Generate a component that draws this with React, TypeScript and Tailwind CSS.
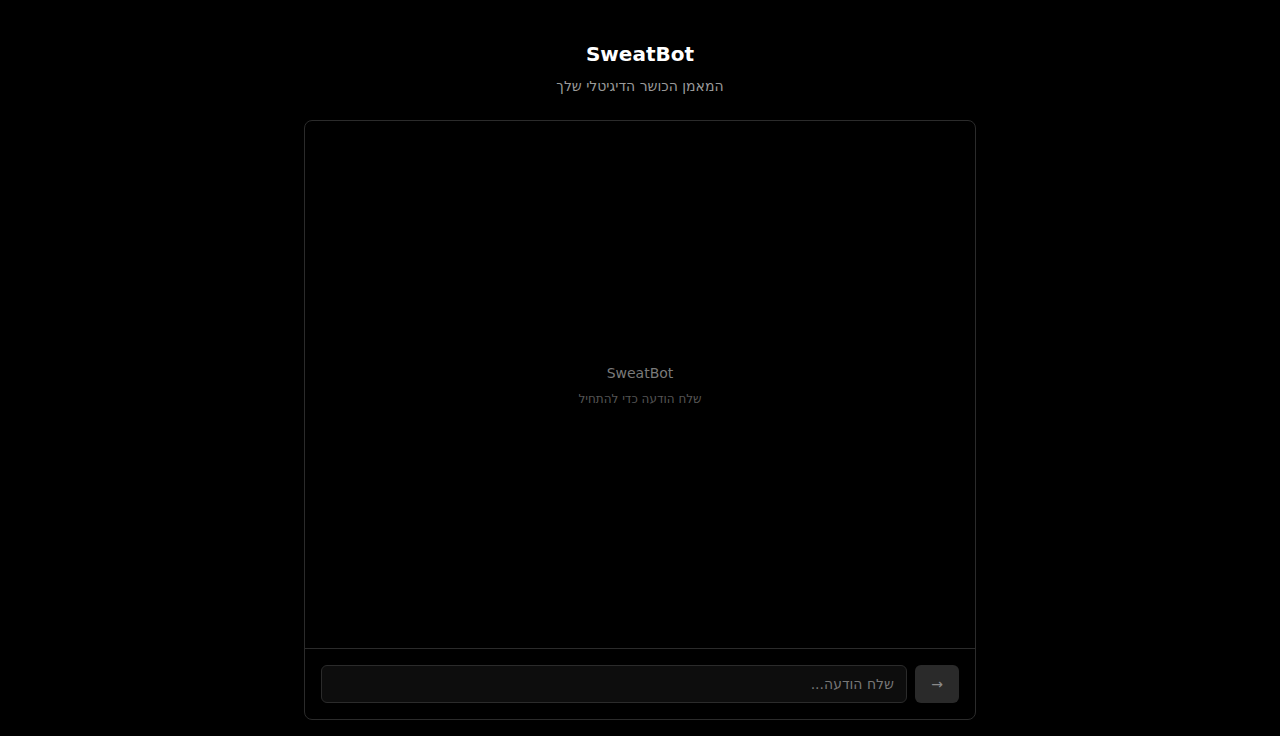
export default function App() {
  return (
    <div
      className="flex h-screen flex-col items-center bg-black px-4 pt-10 pb-4 text-white"
      style={{ fontFamily: '"DejaVu Sans", sans-serif' }}
    >
      <h1 className="text-xl leading-7 font-bold">SweatBot</h1>
      <p className="mt-2 text-sm text-[#9a9a9a]" dir="rtl">
        המאמן הכושר הדיגיטלי שלך
      </p>

      <div className="mt-6 flex w-full max-w-2xl flex-1 flex-col overflow-hidden rounded-lg border border-[#2b2b2b]">
        <div className="flex flex-1 flex-col items-center justify-center">
          <div className="text-sm text-[#7a7a7a]">SweatBot</div>
          <div className="mt-2 text-xs text-[#555555]" dir="rtl">
            שלח הודעה כדי להתחיל
          </div>
        </div>

        <div className="flex gap-2 border-t border-[#2b2b2b] p-4">
          <input
            dir="rtl"
            placeholder="שלח הודעה..."
            className="h-[38px] flex-1 rounded-md border border-[#2b2b2b] bg-[#0d0d0d] px-3 text-sm text-white placeholder:text-[#777777] outline-none"
          />
          <button className="h-[38px] w-11 rounded-md bg-[#2a2a2a] text-sm text-[#8a8a8a]">
            →
          </button>
        </div>
      </div>
    </div>
  );
}
